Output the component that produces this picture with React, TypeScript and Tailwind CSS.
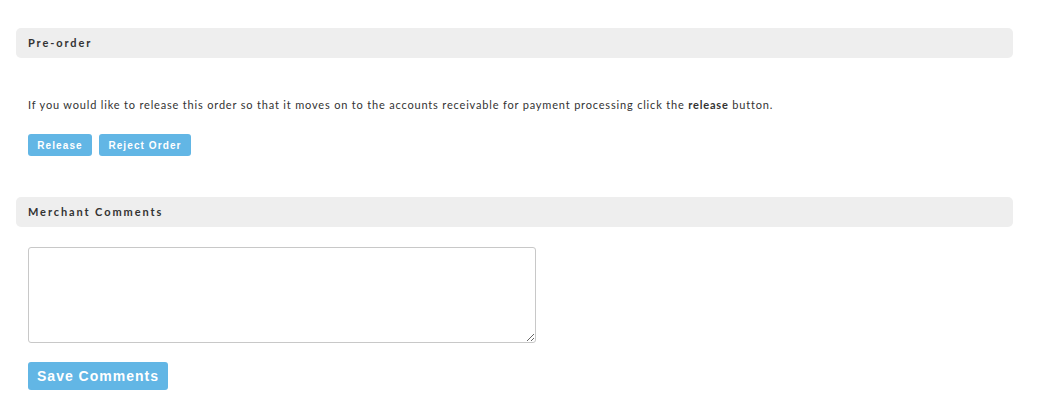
import React from 'react';

const SectionHeader: React.FC<{ title: string }> = ({ title }) => (
  <div className="h-[30px] bg-[#eeeeee] rounded-[5px] px-3 flex items-center">
    <h3 className="text-[11px] font-bold text-[#333] tracking-[1.9px] font-['Lato',sans-serif]">{title}</h3>
  </div>
);

const btn =
  "bg-[#62b6e5] text-white font-bold rounded-[3px] font-['Liberation_Sans',Arial,sans-serif]";

const App: React.FC = () => {
  return (
    <div className="w-[1041px] h-[408px] bg-white pt-7 pl-4 pr-7 font-['Lato',sans-serif] text-[#333]">
      <SectionHeader title="Pre-order" />

      <div className="px-3">
        <p className="mt-[39px] text-[11px] tracking-[0.82px] leading-[16px]">
          If you would like to release this order so that it moves on to the accounts receivable for payment processing click the <b>release</b> button.
        </p>
        <div className="mt-[21px] flex gap-[7px]">
          <button className={`${btn} h-[22px] w-[64px] text-[10px] tracking-[1.1px]`}>Release</button>
          <button className={`${btn} h-[22px] w-[92px] text-[10px] tracking-[1.1px]`}>Reject Order</button>
        </div>
      </div>

      <div className="mt-[41px]">
        <SectionHeader title="Merchant Comments" />
      </div>

      <div className="px-3">
        <textarea className="mt-[20px] block w-[508px] h-[96px] border border-[#c8c8c8] rounded-[3px] bg-white resize-y"></textarea>
        <button className={`${btn} mt-[19px] h-[28px] w-[140px] text-[14px] tracking-[1px]`}>Save Comments</button>
      </div>
    </div>
  );
};

export default App;
